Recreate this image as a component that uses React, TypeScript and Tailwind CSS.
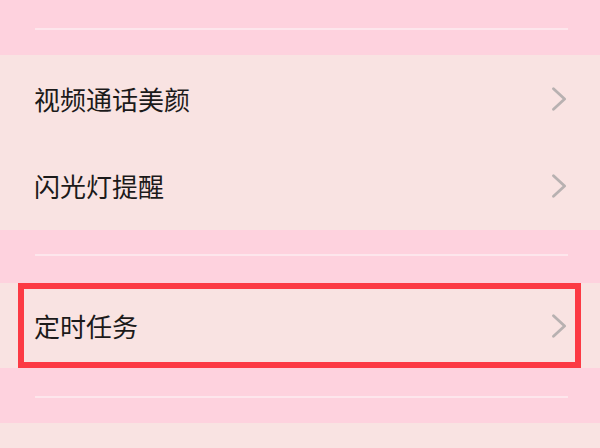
import React from "react";

function Chevron() {
  return (
    <svg width="16" height="24" viewBox="0 0 16 24" className="shrink-0">
      <path d="M2.5 1.8 L13.6 12 L2.5 22.2" fill="none" stroke="#b8b1b1" strokeWidth="2.8" strokeLinecap="round" strokeLinejoin="round" />
    </svg>
  );
}

function Row({ label, h }: { label: string; h: string }) {
  return (
    <div className={`${h} flex items-center justify-between pl-[34px] pr-[33px]`}>
      <span className="text-[26px] leading-none text-[#1c1a1a]">{label}</span>
      <Chevron />
    </div>
  );
}

export default function App() {
  return (
    <div
      className="w-[600px] h-[448px] overflow-hidden bg-[#f9e3e2] flex flex-col"
      style={{ fontFamily: '"Noto Sans CJK SC", "Noto Sans", sans-serif' }}
    >
      <div className="bg-[#fed2de] h-[55px] flex flex-col">
        <div className="h-[28px]" />
        <div className="ml-[35px] mr-[32px] h-[2px] bg-[#fde6ec]" />
      </div>
      <Row label="视频通话美颜" h="h-[87px]" />
      <Row label="闪光灯提醒" h="h-[88px]" />
      <div className="bg-[#fed2de] h-[53px] flex flex-col">
        <div className="h-[24px]" />
        <div className="ml-[35px] mr-[32px] h-[2px] bg-[#fde6ec]" />
      </div>
      <div className="h-[85px] pl-[18px] pr-[19px]">
        <div className="h-full border-[6px] border-[#fc3a44] flex items-center justify-between pl-[10px] pr-[8px]">
          <span className="text-[26px] leading-none text-[#1c1a1a]">定时任务</span>
          <Chevron />
        </div>
      </div>
      <div className="bg-[#fed2de] h-[55px] flex flex-col">
        <div className="h-[28px]" />
        <div className="ml-[35px] mr-[32px] h-[2px] bg-[#fde6ec]" />
      </div>
      <div className="flex-1" />
    </div>
  );
}
